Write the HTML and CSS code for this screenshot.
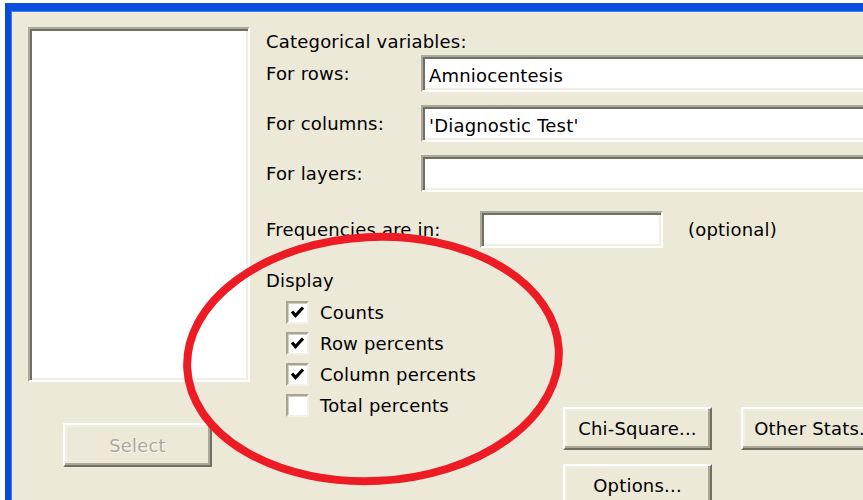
FILE: index.html
```html
<!DOCTYPE html>
<html lang="en">
<head>
<meta charset="utf-8">
<title>Cross Tabulation and Chi-Square</title>
<link rel="stylesheet" href="styles.css">
</head>
<body>
<div class="window">
  <div class="dialog">
    <div class="left">
      <div class="listbox"></div>
      <button class="btn btn-select" type="button" disabled>Select</button>
    </div>
    <div class="right">
      <div class="heading">Categorical variables:</div>
      <div class="fields">
        <label class="label">For rows:</label>
        <div class="field">Amniocentesis</div>
        <label class="label">For columns:</label>
        <div class="field">'Diagnostic Test'</div>
        <label class="label">For layers:</label>
        <div class="field"></div>
      </div>
      <div class="freq">
        <label class="label freq-label">Frequencies are in:</label>
        <div class="field field-short"></div>
        <span class="hint">(optional)</span>
      </div>
      <div class="lower">
        <div class="display">
          <div class="group-title">Display</div>
          <ul class="checks">
            <li class="check-row"><span class="check"><svg viewBox="0 0 19 19"><path d="M4 8.5 L7.5 12.5 L15 4.5"/></svg></span>Counts</li>
            <li class="check-row"><span class="check"><svg viewBox="0 0 19 19"><path d="M4 8.5 L7.5 12.5 L15 4.5"/></svg></span>Row percents</li>
            <li class="check-row"><span class="check"><svg viewBox="0 0 19 19"><path d="M4 8.5 L7.5 12.5 L15 4.5"/></svg></span>Column percents</li>
            <li class="check-row"><span class="check"></span>Total percents</li>
          </ul>
        </div>
        <div class="actions">
          <button class="btn" type="button">Chi-Square...</button>
          <button class="btn" type="button">Other Stats...</button>
          <button class="btn" type="button">Options...</button>
        </div>
      </div>
    </div>
  </div>
  <svg class="annotation" viewBox="0 0 863 500" width="863" height="500">
    <ellipse cx="373" cy="359" rx="186" ry="122" transform="rotate(-3 373 359)"/>
  </svg>
</div>
</body>
</html>
```
FILE: styles.css
```css
html, body {
  margin: 0;
  padding: 0;
  width: 863px;
  height: 500px;
  overflow: hidden;
  background: #ffffff;
}

body {
  font-family: "DejaVu Sans", sans-serif;
  font-size: 18px;
  line-height: 21px;
  letter-spacing: 0.2px;
  color: #000000;
}

/* window frame: blue title edge on top, blue side edge on the left */
.window {
  margin: 3px 0 0 5px;
  width: 920px;
  height: 520px;
  background: #ECE9D8;
  border-top: 8px solid #0A50E0;
  border-left: 6px solid #0A4AD8;
  box-shadow: inset 1px 1px 0 #3C82F4;
}

.dialog {
  display: grid;
  grid-template-columns: 222px 1fr;
  column-gap: 16px;
  padding: 16px 0 0 17px;
}

/* left column: variable list and Select button */
.left {
  display: flex;
  flex-direction: column;
  align-items: flex-start;
}

.listbox {
  box-sizing: border-box;
  width: 222px;
  height: 355px;
  background: #ffffff;
  border: 2px solid;
  border-color: #ACA899 #ffffff #ffffff #ACA899;
  box-shadow: inset 2px 2px 0 #716F64, inset -2px -2px 0 #F1EFE2;
}

.btn {
  box-sizing: border-box;
  width: 149px;
  height: 43px;
  padding: 0;
  margin: 0;
  font: inherit;
  letter-spacing: inherit;
  color: #000000;
  background: #ECE9D8;
  border: 2px solid;
  border-color: #ffffff #716F64 #716F64 #ffffff;
  box-shadow: inset -2px -2px 0 #ACA899, inset 2px 2px 0 #F1EFE2;
  white-space: nowrap;
  overflow: visible;
}

.btn-select {
  margin: 41px 0 0 35px;
  height: 44px;
  color: #ACA899;
  text-shadow: 1px 1px 0 #ffffff;
}

/* right column: form */
.right {
  margin-top: 4px;
}

.heading {
  height: 21px;
}

.fields {
  display: grid;
  grid-template-columns: 155px 1fr;
  row-gap: 13px;
  margin-top: 3px;
  align-items: center;
}

.label {
  white-space: nowrap;
}

.field {
  box-sizing: border-box;
  height: 37px;
  padding: 8px 6px 0;
  background: #ffffff;
  border: 2px solid;
  border-color: #ACA899 #ffffff #ffffff #ACA899;
  box-shadow: inset 2px 2px 0 #716F64, inset -2px -2px 0 #F1EFE2;
  white-space: nowrap;
}

.freq {
  display: flex;
  align-items: center;
  margin-top: 19px;
}

.freq-label {
  width: 214px;
}

.field-short {
  width: 183px;
}

.hint {
  margin-left: 25px;
}

.lower {
  display: flex;
  margin-top: 22px;
}

.display {
  width: 297px;
}

.group-title {
  height: 21px;
}

.checks {
  list-style: none;
  margin: 10px 0 0;
  padding: 0 0 0 20px;
  display: flex;
  flex-direction: column;
  gap: 8px;
}

.check-row {
  display: flex;
  align-items: center;
  height: 23px;
  gap: 11px;
  white-space: nowrap;
}

.check {
  box-sizing: border-box;
  width: 23px;
  height: 23px;
  flex: none;
  background: #ffffff;
  border: 2px solid;
  border-color: #A7A496 #F4F2E8 #F4F2E8 #A7A496;
  box-shadow: inset 1px 1px 0 #D2CFC0;
}

.check svg {
  display: block;
  width: 19px;
  height: 19px;
}

.check path {
  fill: none;
  stroke: #000000;
  stroke-width: 3.2;
}

.actions {
  display: grid;
  grid-template-columns: 149px 149px;
  column-gap: 29px;
  row-gap: 14px;
  padding-top: 137px;
  align-content: start;
}

/* red marker circled around the Display options */
.annotation {
  position: absolute;
  left: 0;
  top: 0;
  pointer-events: none;
}

.annotation ellipse {
  fill: none;
  stroke: #ED1C24;
  stroke-width: 8;
}
```
